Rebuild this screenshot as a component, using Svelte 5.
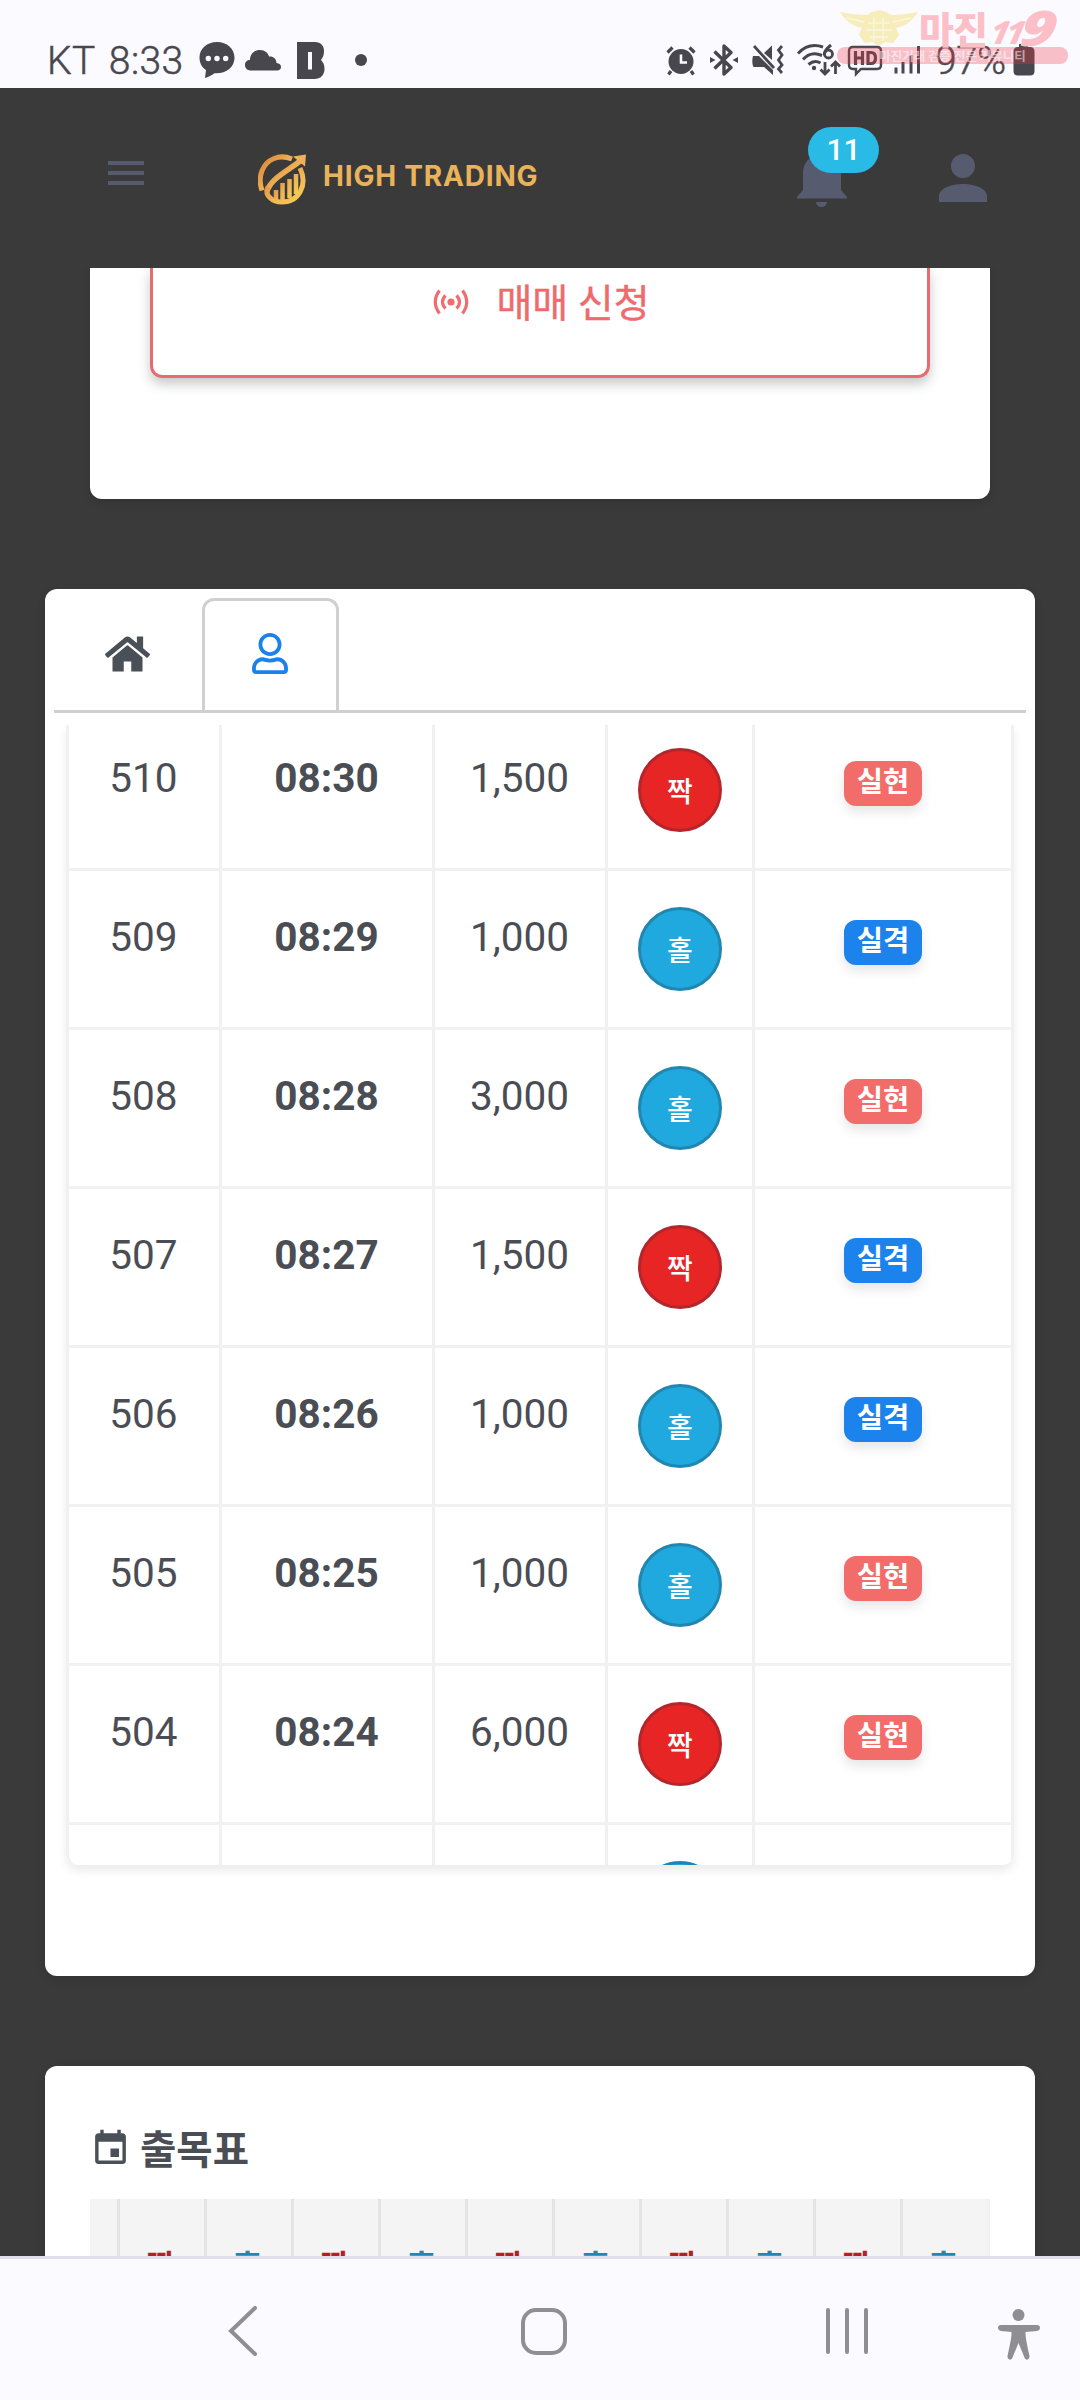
<script>
  const rows = [
    { no: '510', time: '08:30', amount: '1,500', pick: '짝', result: '실현' },
    { no: '509', time: '08:29', amount: '1,000', pick: '홀', result: '실격' },
    { no: '508', time: '08:28', amount: '3,000', pick: '홀', result: '실현' },
    { no: '507', time: '08:27', amount: '1,500', pick: '짝', result: '실격' },
    { no: '506', time: '08:26', amount: '1,000', pick: '홀', result: '실격' },
    { no: '505', time: '08:25', amount: '1,000', pick: '홀', result: '실현' },
    { no: '504', time: '08:24', amount: '6,000', pick: '짝', result: '실현' },
    { no: '', time: '', amount: '', pick: '홀', result: '' }
  ];
  const outcomes = ['짝', '홀', '짝', '홀', '짝', '홀', '짝', '홀', '짝', '홀'];
</script>

<div class="screen">
  <div class="status">
    <span class="carrier">KT 8:33</span>
    <svg class="chat" width="36" height="36" viewBox="0 0 36 36"><path fill="#48474d" d="M18 0C8 0 .5 6.500.5 15.500c0 5.500 2.500 10 6.500 12.500L6 36c4-1 7.500-3 9.500-4.700C27 32 35.500 25 35.500 16 35.500 6.500 28 0 18 0z"/><g fill="#fafaff"><circle cx="9.300" cy="16.500" r="2.700"/><circle cx="18" cy="16.500" r="2.700"/><circle cx="26.700" cy="16.500" r="2.700"/></g></svg>
    <svg class="cloud" width="36" height="21" viewBox="0 0 36 21"><path fill="#48474d" d="M6 20.500C2.500 20.500 0 18.300 0 15c0-3 2-5 5-5C5 4 9 0 15 0c5 0 8 3 9 6.500 4-.5 7.500 2 7.500 6.500 3 .3 4.500 1.800 4.500 4s-1.500 3.500-4 3.500z"/></svg>
    <svg class="bee" width="28" height="37" viewBox="0 0 28 37"><path fill="#48474d" fill-rule="evenodd" d="M0 0h18c6 0 9 4 9 9 0 4-1 6.500-3 9 2.500 2.500 3.500 5 3.500 9 0 6-4 10-10 10H0zM11 10v17.500h4V10z"/></svg>
    <span class="dot"></span>

    <div class="tray">
      <svg class="alarm" width="30" height="31" viewBox="0 0 30 31"><circle cx="15" cy="16.500" r="12.500" fill="#48474d"/><path d="M1.500 7.500L6.500 2.500M28.500 7.500L23.500 2.500M5 26l-2.500 3.500M25 26l2.500 3.500" stroke="#48474d" stroke-width="3.200" fill="none"/><path d="M15 9.500v8h6" stroke="#fafaff" stroke-width="2.600" fill="none"/></svg>
      <svg class="bt" width="30" height="34" viewBox="0 0 30 34"><path d="M5.500 8.500L22 24.500 15 31V3l7 6.500L5.500 25.500" fill="none" stroke="#48474d" stroke-width="3.400" stroke-linejoin="round"/><path d="M1 14l5.500 3L1 20zM29 14l-5.500 3 5.500 3z" fill="#48474d"/></svg>
      <svg class="mute" width="34" height="32" viewBox="0 0 34 32"><path d="M2 12h6l14 14v5l-9-8H2.500C1 20 1 15 2 12zM13 9l8-7.500V16z" fill="#48474d"/><path d="M3 2l20 22" stroke="#48474d" stroke-width="2.800"/><path d="M31 2l-3.500 4 3.500 5-3.500 5 3.500 5-3.500 4 3.500 4" fill="none" stroke="#48474d" stroke-width="2.800"/></svg>
      <svg class="wifi" width="45" height="34" viewBox="0 0 45 34"><path d="M2 10.500C9 3 18 1 27 4M7 16.500c5-5.500 12-7 19-4M12.500 21.500c4-3.500 8-4 12-1.500" fill="none" stroke="#48474d" stroke-width="3"/><circle cx="18" cy="25" r="2.200" fill="#48474d"/><path d="M35 2c-5 4-7 7-6.500 10" fill="none" stroke="#48474d" stroke-width="3"/><circle cx="32.500" cy="11" r="4" fill="none" stroke="#48474d" stroke-width="2.800"/><path d="M29 19v12M24.500 26.500L29 31l4.500-4.500M39.500 31V19M35 23.500l4.500-4.500 4.500 4.500" fill="none" stroke="#48474d" stroke-width="2.800"/></svg>
      <svg class="hd" width="36" height="32" viewBox="0 0 36 32"><path d="M6 2h24c3 0 4 1.500 4 4v14c0 3-1.500 4-4 4H14l-5 5v-5H6c-3 0-4-1.500-4-4V6c0-3 1.500-4 4-4z" fill="none" stroke="#48474d" stroke-width="2.400"/><path d="M8.500 6v14M15.500 6v14M8.500 13h7M21 7.500h3c3.500 0 4.500 2.500 4.500 5.500s-1 5.500-4.500 5.500h-3z" fill="none" stroke="#48474d" stroke-width="3.200"/></svg>
      <svg class="signal" width="28" height="30" viewBox="0 0 28 30"><path d="M3 22.500v6M10 17v11.500M18 10v18.500M25.500 1v27.500" stroke="#48474d" stroke-width="3" fill="none"/></svg>
      <span class="pct">97%</span>
      <svg class="battery" width="22" height="32" viewBox="0 0 22 32"><path fill="#48474d" d="M6 0h9v3h2c3 0 4.500 1.500 4.500 4.500V27c0 3-1.500 4.500-4.500 4.500H5C2 31.500.5 30 .5 27V7.500C.5 4.500 2 3 5 3h1z"/></svg>
    </div>

    <div class="stamp">
      <svg class="crest" width="78" height="36" viewBox="0 0 78 36"><path fill="#f7ebb0" d="M0 2c10 2 18 3 27 3l5-3 7-2 7 2 5 3c9 0 17-1 27-3-5 8-12 14-22 16l3 7-6 8-8-1-6 4-6-4-8 1-6-8 3-7C12 16 5 10 0 2z"/><path d="M7 8l17 4M53 12l18-4M28 13h22M26 20h26M30 27h18M34 7v24M43 7v24" stroke="#fbf6dc" stroke-width="1.500"/></svg>
      <span class="brand">마진</span>
      <span class="num"><small>11</small><em>9</em></span>
      <span class="ribbon">마진거래 검증 전문 커뮤니티</span>
    </div>
  </div>

  <header>
    <div class="burger"><i></i><i></i><i></i></div>
    <div class="logo">
      <svg width="50" height="51" viewBox="0 0 50 51">
        <defs><linearGradient id="gold" x1="0" y1="0" x2="1" y2="1"><stop offset="0" stop-color="#d9822f"/><stop offset=".55" stop-color="#f0b458"/><stop offset="1" stop-color="#f5d050"/></linearGradient></defs>
        <path d="M4 36.500C-1 22 5 9 16 4.500c6-2.500 12-2 18 .5" fill="none" stroke="url(#gold)" stroke-width="5"/>
        <path d="M9 37C13 25 26 19 43 6.500" fill="none" stroke="url(#gold)" stroke-width="5.500"/>
        <path d="M35 2.500L48 .5l-1 12z" fill="#eeb35a"/>
        <path d="M10 33c-4 8 4 15 14 15 17 0 26-17 18-34" fill="none" stroke="url(#gold)" stroke-width="5"/>
        <path d="M18 45v-9M24.500 46V29M31.500 44V25M38 40V20" fill="none" stroke="url(#gold)" stroke-width="4.500"/>
      </svg>
      <span>HIGH TRADING</span>
    </div>
    <div class="bell">
      <svg width="50" height="56" viewBox="0 0 50 56"><path fill="#565b70" d="M0 46l6-7V22C6 12 13 5 21 3.500V0h7v3.500C36 5 44 12 44 22v17l6 7v1.500H0zM19 51h11c-.5 3.500-2.500 5-5.500 5S19.500 54.500 19 51z"/></svg>
      <b>11</b>
    </div>
    <svg class="user" width="72" height="72" viewBox="0 0 24 24"><path fill="#565b70" d="M12 4a4 4 0 0 1 0 8a4 4 0 0 1 0-8M12 14C16.420 14 20 15.790 20 18V20H4V18C4 15.790 7.580 14 12 14Z"/></svg>
  </header>

  <main>
    <section class="card apply">
      <div class="button">
        <svg width="36" height="26" viewBox="0 0 36 26"><g fill="none" stroke="#ee6e70" stroke-width="3.200"><path d="M6.500 1.500C1 9 1 17 6.500 24.500M29.500 1.500C35 9 35 17 29.500 24.500M12.500 6.500c-4 4-4 9 0 13M23.500 6.500c4 4 4 9 0 13"/></g><circle cx="18" cy="13" r="3.600" fill="#ee6e70"/></svg>
        <span>매매 신청</span>
      </div>
    </section>

    <section class="card trades">
      <div class="tabs">
        <div class="tab"><svg width="45" height="40" viewBox="0 0 576 512"><path fill="#495057" d="M280.370 148.260L96 300.110V480H240V352h96v128h144V300L295.670 148.260a12.190 12.190 0 0 0-15.300 0zM571.600 251.470L488 182.560V32.050H408v84.610L318.470 43a48 48 0 0 0-61 0L4.340 251.470a12 12 0 0 0-1.600 16.900l25.500 31A12 12 0 0 0 45.150 301l235.220-193.740a12.190 12.190 0 0 1 15.300 0L530.900 301a12 12 0 0 0 16.900-1.600l25.500-31a12 12 0 0 0-1.700-16.930z"/></svg></div>
        <div class="tab on"><svg width="36" height="41" viewBox="0 0 448 512"><path fill="#1b82ec" d="M313.600 304c-28.700 0-42.500 16-89.600 16-47.100 0-60.800-16-89.600-16C60.200 304 0 364.200 0 438.400V464c0 26.500 21.500 48 48 48h352c26.500 0 48-21.500 48-48v-25.600c0-74.200-60.200-134.400-134.400-134.400zM400 464H48v-25.600c0-47.600 38.800-86.400 86.400-86.400 14.600 0 38.300 16 89.600 16 51.700 0 74.900-16 89.600-16 47.600 0 86.400 38.800 86.400 86.400V464zM224 288c79.500 0 144-64.500 144-144S303.500 0 224 0 80 64.500 80 144s64.500 144 144 144zm0-240c52.900 0 96 43.100 96 96s-43.100 96-96 96-96-43.100-96-96 43.100-96 96-96z"/></svg></div>
      </div>
      <div class="grid">
        <div class="rows">
          {#each rows as r}
            <div class="row">
              <div class="cell">{r.no}</div>
              <div class="cell time">{r.time}</div>
              <div class="cell">{r.amount}</div>
              <div class="cell mark"><span class="pick" class:odd={r.pick === '홀'}>{r.no ? r.pick : ''}</span></div>
              <div class="cell mark">
                {#if r.result}<span class="badge" class:miss={r.result === '실격'}>{r.result}</span>{/if}
              </div>
            </div>
          {/each}
        </div>
      </div>
    </section>

    <section class="card history">
      <h2>
        <svg width="41" height="41" viewBox="0 0 24 24"><path fill="#495057" d="M19 19H5V8H19M16 1V3H8V1H6V3H5C3.890 3 3 3.890 3 5V19A2 2 0 0 0 5 21H19A2 2 0 0 0 21 19V5C21 3.890 20.100 3 19 3H18V1M17 12H12V17H17V12Z"/></svg>
        <span>출목표</span>
      </h2>
      <div class="outcomes">
        <div class="lead"></div>
        {#each outcomes as o}
          <div class="out" class:odd={o === '홀'}>{o}</div>
        {/each}
      </div>
    </section>
  </main>

  <nav>
    <svg class="back" width="30" height="50" viewBox="0 0 30 50"><path d="M27 2L3 25l24 23" fill="none" stroke="#8e8e93" stroke-width="4" stroke-linecap="round"/></svg>
    <span class="home"></span>
    <div class="recent"><i></i><i></i><i></i></div>
    <svg class="access" width="42" height="51" viewBox="0 0 42 51"><circle cx="20.500" cy="6" r="6" fill="#8e8e93"/><path fill="#8e8e93" d="M3 16h36c4 0 4 5.500 0 6L27.500 23c0 6 1 10 4 24 .5 4-4 5-5 1.500L20.500 34l-6 14.500c-1 3.500-5.500 2.500-5-1.500 3-14 4-18 4-24L3 22c-4-.5-4-6 0-6z"/></svg>
  </nav>
</div>

<style>
  :global(body) { margin: 0; background: #3a3a3a; }
  .screen {
    width: 1080px; height: 2400px; overflow: hidden; display: flex; flex-direction: column;
    background: #3a3a3a; color: #4a4e54; font-family: Roboto, "Noto Sans CJK KR", sans-serif;
  }
  svg { display: block; flex: none; }
  .status {
    position: relative; height: 88px; flex: none; box-sizing: border-box; padding: 32px 45px 0 47px;
    display: flex; align-items: center; background: #fafaff; color: #48474d;
  }
  .carrier { font-size: 39px; font-weight: 300; line-height: 56px; width: 152px; white-space: nowrap; word-spacing: 4px; letter-spacing: .4px; padding-top: 1px; -webkit-text-stroke: .5px #48474d; }
  .cloud { margin-left: 10px; }
  .bee { margin-left: 16px; }
  .dot { width: 12px; height: 12px; border-radius: 50%; background: #48474d; margin-left: 30px; }
  .tray { margin-left: auto; display: flex; align-items: center; }
  .bt { margin-left: 13px; }
  .mute { margin-left: 12px; }
  .wifi { margin-left: 11px; }
  .hd { margin-left: 6px; margin-top: 1px; }
  .signal { margin-left: 10px; }
  .pct { margin-left: 14px; width: 73px; font-size: 39px; font-weight: 300; line-height: 56px; letter-spacing: -.5px; padding-top: 1px; -webkit-text-stroke: .5px #48474d; }
  .battery { margin-left: 5px; }

  .stamp { position: absolute; left: 837px; top: 8px; width: 231px; height: 56px; display: grid; grid-template-columns: 82px 72px 77px; grid-template-rows: 39px 17px; }
  .crest { margin: 2px 0 0 3px; opacity: .85; }
  .brand { font-family: "Noto Sans CJK KR", sans-serif; font-weight: 900; font-size: 38px; line-height: 40px; color: #fcbfc8; letter-spacing: -1px; }
  .num { display: flex; align-items: flex-end; font-family: "Open Sans", sans-serif; font-weight: 800; font-style: italic; color: #fcbfc8; }
  .num small { font-size: 32px; line-height: 30px; letter-spacing: -3px; width: 34px; transform: skewX(-12deg); }
  .num em { font-size: 49px; line-height: 40px; transform: skewX(-12deg) scaleX(1.25); }
  .ribbon {
    grid-column: 1 / 4; border-radius: 8px; background: rgba(240, 50, 70, .29); color: rgba(255, 255, 255, .55);
    font-size: 12.500px; font-weight: 700; line-height: 17px; text-align: center; font-family: "Noto Sans CJK KR", sans-serif;
  }

  header { height: 180px; flex: none; display: flex; align-items: flex-start; padding-left: 108px; }
  .burger { margin-top: 73px; width: 36px; display: flex; flex-direction: column; gap: 6px; }
  .burger i { height: 4px; background: #565b70; }
  .logo { display: flex; align-items: flex-start; margin: 66px 0 0 114px; width: 440px; height: 51px; }
  .logo span { margin-left: 15px; font-family: Inter, sans-serif; font-weight: 700; font-size: 28px; line-height: 44px; color: #e9b35b; white-space: nowrap; letter-spacing: .8px; }
  .bell { position: relative; margin: 63px 0 0 99px; width: 50px; }
  .bell b {
    position: absolute; left: 11px; top: -24px; width: 71px; height: 46px; border-radius: 23px; background: #29bbe6;
    color: #fff; font-weight: 500; font-size: 30px; line-height: 45px; text-align: center; letter-spacing: 0;
  }
  .user { margin: 54px 0 0 80px; }

  main { height: 1988px; flex: none; overflow: hidden; display: flex; flex-direction: column; }
  .card { background: #fff; border-radius: 12px; box-shadow: 0 3px 9px rgba(0, 0, 0, .12); flex: none; box-sizing: border-box; }
  .apply { margin: 0 90px; height: 231px; border-top-left-radius: 0; border-top-right-radius: 0; padding: 0 60px; overflow: hidden; }
  .button {
    height: 110px; box-sizing: border-box; border: 3px solid #e66c72; border-top: 0; border-radius: 0 0 12px 12px;
    box-shadow: 0 6px 12px rgba(30, 40, 45, .25); display: flex; justify-content: center; padding-left: 3px; color: #ee6a6b;
  }
  .button svg { margin-top: 21px; }
  .button span { margin-left: 27px; font-size: 39px; line-height: 60px; margin-top: 6px; -webkit-text-stroke: .4px #ee6a6b; }

  .trades { margin: 90px 45px 0; height: 1387px; padding: 9px 9px 0; }
  .tabs { height: 115px; box-sizing: border-box; border-bottom: 3px solid #d0d0d0; display: flex; }
  .tab { width: 148px; display: flex; justify-content: center; box-sizing: border-box; padding: 36px 0 0 0; }
  .tab:first-child { padding-right: 2px; }
  .on { width: 137px; border: 3px solid #d0d0d0; border-bottom: 0; border-radius: 12px 12px 0 0; padding: 32px 1px 0 0; }
  .grid {
    margin: 12px 12px 0 12px; width: 948px; height: 1140px; overflow: hidden; border-radius: 0 0 12px 12px;
    box-shadow: 0 6px 10px rgba(0, 0, 0, .08); box-sizing: border-box; border-left: 3px solid #f1f1f2;
  }
  .rows { margin-top: -13px; }
  .row { height: 159px; display: grid; grid-template-columns: 153px 213px 173px 147px 259px; }
  .cell {
    border: solid #f1f1f2; border-width: 0 3px 3px 0; display: flex; justify-content: center; align-items: flex-start;
    font-size: 40.500px; line-height: 60px; padding: 36px 1px 0 0; box-sizing: border-box;
  }
  .mark { padding-right: 0; }
  .time { font-weight: 700; }
  .pick {
    width: 84px; height: 84px; box-sizing: border-box; border: 3px solid #b4262b; border-radius: 50%; background: #e82525;
    color: #fff; font-size: 28px; font-weight: 500; line-height: 83px; text-align: center;
  }
  .pick.odd { background: #1fa9de; border-color: #2186b0; }
  .badge {
    width: 78px; height: 45px; margin-top: 13px; border-radius: 12px; background: #f26c6a; color: #fff; font-weight: 700; font-size: 28.500px;
    line-height: 44px; text-align: center; box-shadow: 0 6px 12px rgba(0, 0, 0, .1);
  }
  .miss { background: #1c82ec; }

  .history { margin: 90px 45px 0; height: 240px; padding: 0 45px; }
  h2 { margin: 62px 0 0; height: 71px; display: flex; font-size: 39.500px; font-weight: 700; line-height: 46px; }
  h2 span { margin-left: 9px; }
  .outcomes { display: flex; background: #f4f4f4; height: 100px; }
  .lead { width: 30px; border-right: 3px solid #e4e4e4; box-sizing: border-box; }
  .out { width: 87px; box-sizing: border-box; border-right: 3px solid #e4e4e4; text-align: center; font-size: 31px; font-weight: 700; line-height: 44px; padding: 46px 3px 0 0; color: #b81e24; }
  .out.odd { color: #1f86b5; }
  .out:last-child { border-color: #f1f1f1; }

  nav { height: 144px; flex: none; box-sizing: border-box; border-top: 3px solid #e1e0ea; background: #fafaff; display: flex; padding-left: 228px; }
  .back { margin-top: 47px; }
  .home { margin: 49px 0 0 263px; width: 46px; height: 47px; box-sizing: border-box; border: 4px solid #8e8e93; border-radius: 15px; }
  .recent { margin: 49px 0 0 259px; display: flex; gap: 15px; height: 46px; }
  .recent i { width: 4px; border-radius: 2px; background: #8e8e93; }
  .access { margin: 50px 0 0 130px; }
</style>
